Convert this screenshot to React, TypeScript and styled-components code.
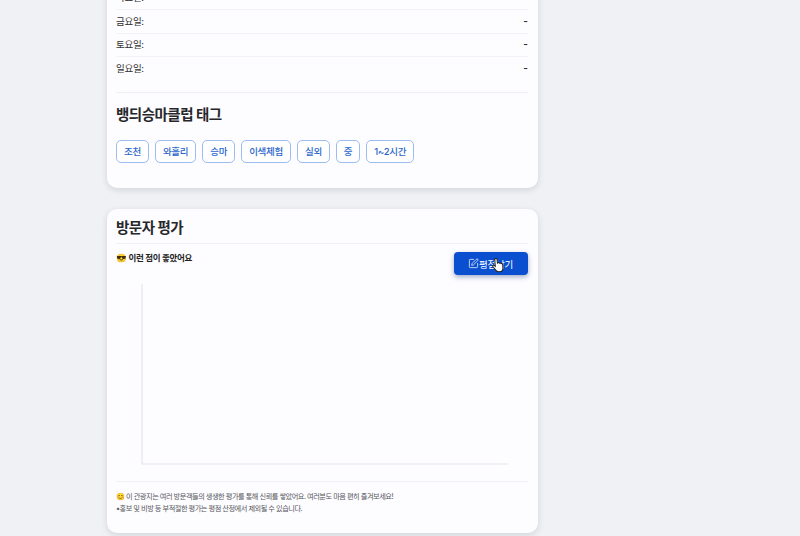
import React from 'react';
import styled, { createGlobalStyle } from 'styled-components';
import { SquarePen } from 'lucide-react';

const GlobalStyle = createGlobalStyle`
  html, body {
    margin: 0;
    height: 536px;
    overflow: hidden;
    background: #f0f1f4;
    font-family: Inter, "Noto Sans CJK KR", "Noto Sans", sans-serif;
    color: #222;
  }
`;

const Page = styled.div`
  width: 431px;
  margin: -13px 0 0 107px;
  display: flex;
  flex-direction: column;
  gap: 21px;
`;

const Card = styled.section`
  background: #fdfcff;
  border-radius: 10px;
  box-shadow: 0 2px 6px rgba(30, 40, 70, 0.14);
  padding: 0 10px 0 9px;
`;

const HoursCard = styled(Card)`
  height: 201px;
  border-radius: 0 0 10px 10px;
`;

const Row = styled.div`
  box-sizing: border-box;
  display: flex;
  justify-content: space-between;
  align-items: center;
  height: 23.4px;
  padding-bottom: 2px;
  font-size: 9.5px;
  letter-spacing: -0.3px;
  color: #333;
  border-bottom: 1px solid #f3f2f6;
  &:nth-child(4) { border-bottom: none; }
`;

const Dash = styled.span`
  font-weight: 600;
  font-size: 10px;
  letter-spacing: 0;
`;

const SectionTitle = styled.h2`
  margin: 0;
  font-size: 14.5px;
  line-height: 22px;
  letter-spacing: -0.5px;
  font-weight: 700;
  color: #26272b;
`;

const TagSection = styled.div`
  margin-top: 11px;
  padding-top: 11px;
  border-top: 1px solid #efeff3;
`;

const TagList = styled.div`
  display: flex;
  gap: 5.9px;
  margin-top: 14px;
`;

const Tag = styled.span`
  height: 21px;
  padding: 0 7px;
  display: flex;
  align-items: center;
  border: 1px solid #9dbdf0;
  border-radius: 5px;
  font-size: 9.5px;
  font-weight: 500;
  letter-spacing: -0.25px;
  color: #2b66cc;
  background: #fff;
`;

const ReviewCard = styled(Card)`
  height: 324px;
  display: flex;
  flex-direction: column;
`;

const ReviewHeader = styled.div`
  height: 35px;
  padding-top: 3px;
  box-sizing: border-box;
  display: flex;
  align-items: center;
  border-bottom: 1px solid #f1f0f4;
`;

const ReviewBody = styled.div`
  position: relative;
  height: 237px;
  border-bottom: 1px solid #f1f0f4;
`;

const GoodLabel = styled.div`
  position: absolute;
  left: 0;
  top: 8px;
  font-size: 8.5px;
  line-height: 13px;
  letter-spacing: -0.3px;
  font-weight: 700;
  color: #222;
`;

const WriteButton = styled.button`
  position: absolute;
  right: 0;
  top: 8px;
  width: 74px;
  height: 23px;
  display: flex;
  align-items: center;
  justify-content: center;
  gap: 0;
  padding: 0 1px 0 0;
  border: none;
  border-radius: 4px;
  background: #0b4fd1;
  box-shadow: 0 2px 5px rgba(20, 50, 120, 0.4);
  color: #fff;
  font-family: inherit;
  font-size: 9.5px;
  letter-spacing: -0.25px;
`;

const Chart = styled.svg`
  position: absolute;
  left: 25px;
  top: 40px;
`;

const Cursor = styled.svg`
  position: absolute;
  left: 375px;
  top: 13px;
`;

const Notice = styled.div`
  padding-top: 9px;
  font-size: 7.2px;
  line-height: 11.5px;
  letter-spacing: -0.48px;
  color: #55565c;
`;

const days = ['목요일:', '금요일:', '토요일:', '일요일:'];
const tags = ['조천', '와흘리', '승마', '이색체험', '실외', '중', '1~2시간'];

export default function App() {
  return (
    <>
      <GlobalStyle />
      <Page>
        <HoursCard>
          {days.map(day => (
            <Row key={day}>
              <span>{day}</span>
              <Dash>-</Dash>
            </Row>
          ))}
          <TagSection>
            <SectionTitle>뱅듸승마클럽 태그</SectionTitle>
            <TagList>
              {tags.map(tag => <Tag key={tag}>{tag}</Tag>)}
            </TagList>
          </TagSection>
        </HoursCard>
        <ReviewCard>
          <ReviewHeader>
            <SectionTitle>방문자 평가</SectionTitle>
          </ReviewHeader>
          <ReviewBody>
            <GoodLabel>😎 이런 점이 좋았어요</GoodLabel>
            <WriteButton>
              <SquarePen size={11} strokeWidth={1.6} />
              평점남기
            </WriteButton>
            <Chart width="370" height="184" viewBox="0 0 370 184">
              <path d="M1 0V180H367" fill="none" stroke="#e6e6ec" strokeWidth="1.2" />
            </Chart>
            <Cursor width="14" height="16" viewBox="0 0 12 14">
              <path
                d="M3.5 1.5c.8-.6 1.6 0 1.7.8l.3 3 .4-.3c.6-.3 1.2 0 1.4.4.5-.3 1.2-.1 1.4.4.6-.2 1.3.2 1.4.9l.2 3c0 1.8-1 3.3-3 3.3H6.500c-1.200 0-1.900-.6-2.500-1.500L1.400 8.300c-.4-.7.5-1.500 1.200-1l1 .9-.4-5.700c0-.4.300-.8.500-1z"
                fill="#fff"
                stroke="#222"
                strokeWidth="0.9"
              />
            </Cursor>
          </ReviewBody>
          <Notice>
            <div>😊 이 관광지는 여러 방문객들의 생생한 평가를 통해 신뢰를 쌓았어요. 여러분도 마음 편히 즐겨보세요!</div>
            <div>•홍보 및 비방 등 부적절한 평가는 평점 산정에서 제외될 수 있습니다.</div>
          </Notice>
        </ReviewCard>
      </Page>
    </>
  );
}
